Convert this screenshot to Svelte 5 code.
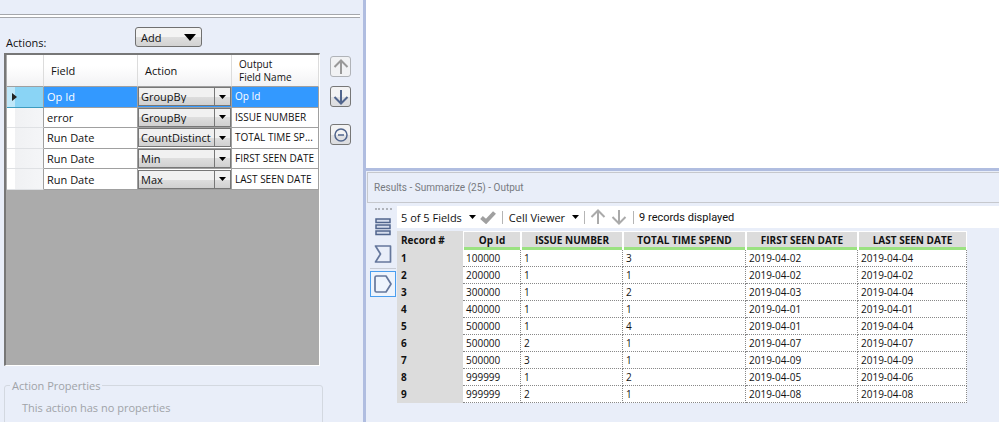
<script>
  const ACTION_TYPES = ['GroupBy', 'CountDistinct', 'Min', 'Max'];

  let actions = $state([
    { field: 'Op Id', action: 'GroupBy', output: 'Op Id' },
    { field: 'error', action: 'GroupBy', output: 'ISSUE NUMBER' },
    { field: 'Run Date', action: 'CountDistinct', output: 'TOTAL TIME SP...' },
    { field: 'Run Date', action: 'Min', output: 'FIRST SEEN DATE' },
    { field: 'Run Date', action: 'Max', output: 'LAST SEEN DATE' },
  ]);
  let selected = $state(0);

  const columns = ['Op Id', 'ISSUE NUMBER', 'TOTAL TIME SPEND', 'FIRST SEEN DATE', 'LAST SEEN DATE'];
  const records = [
    ['100000', 1, 3, '2019-04-02', '2019-04-04'],
    ['200000', 1, 1, '2019-04-02', '2019-04-02'],
    ['300000', 1, 2, '2019-04-03', '2019-04-04'],
    ['400000', 1, 1, '2019-04-01', '2019-04-01'],
    ['500000', 1, 4, '2019-04-01', '2019-04-04'],
    ['500000', 2, 1, '2019-04-07', '2019-04-07'],
    ['500000', 3, 1, '2019-04-09', '2019-04-09'],
    ['999999', 1, 2, '2019-04-05', '2019-04-06'],
    ['999999', 2, 1, '2019-04-08', '2019-04-08'],
  ];
</script>

{#snippet arrow(d)}
  <svg width="16" height="16" viewBox="0 0 16 16" fill="none" stroke="currentColor" stroke-width="2">
    <path {d} />
  </svg>
{/snippet}

{#snippet caret()}
  <svg class="caret" width="7" height="4" viewBox="0 0 7 4"><path d="M0 0h7L3.500 4z" fill="#000" /></svg>
{/snippet}

<div class="app">
  <section class="config">
    <div class="splitter"></div>
    <div class="top">
      <span class="title">Actions:</span>
      <button class="add">
        Add
        <svg width="12" height="7" viewBox="0 0 12 7"><path d="M0 0h12L6 7z" /></svg>
      </button>
    </div>

    <div class="body">
      <div class="grid">
        <table class="actions">
          <colgroup>
            <col class="c-mark" /><col class="c-field" /><col class="c-field" /><col />
          </colgroup>
          <thead>
            <tr><th></th><th>Field</th><th>Action</th><th class="out">Output<br />Field Name</th></tr>
          </thead>
          <tbody>
            {#each actions as row, i}
              <tr class:selected={selected === i} onclick={() => (selected = i)}>
                <td class="mark">
                  {#if selected === i}
                    <svg width="5" height="8" viewBox="0 0 5 8"><path d="M0 0l5 4-5 4z" fill="#222" /></svg>
                  {/if}
                </td>
                <td>{row.field}</td>
                <td class="pick">
                  <div class="combo">
                    <select bind:value={row.action} aria-label="Action for {row.field}">
                      {#each ACTION_TYPES as type}
                        <option>{type}</option>
                      {/each}
                    </select>
                    <span class="drop">{@render caret()}</span>
                  </div>
                </td>
                <td class="out">{row.output}</td>
              </tr>
            {/each}
          </tbody>
        </table>
      </div>
      <div class="side">
        <button class="tool dim" aria-label="Move up">{@render arrow('M8 15V2M1.500 8L8 1.500L14.500 8')}</button>
        <button class="tool" aria-label="Move down">{@render arrow('M8 1v13M1.500 8L8 14.500L14.500 8')}</button>
        <button class="tool remove" aria-label="Remove">
          <svg width="14" height="14" viewBox="0 0 14 14" fill="none" stroke="currentColor" stroke-width="1.500">
            <circle cx="7" cy="7" r="6" /><path d="M4 7h6" />
          </svg>
        </button>
      </div>
    </div>

    <fieldset>
      <legend>Action Properties</legend>
      <p>This action has no properties</p>
    </fieldset>
  </section>

  <main>
    <div class="canvas"></div>
    <section class="results">
      <header>Results - Summarize (25) - Output</header>
      <div class="output">
        <nav>
          <span class="grip"></span>
          <button aria-label="Messages">
            <svg width="16" height="18" viewBox="0 0 16 18" fill="#d5dcec" stroke="#51658d" stroke-width="1.500">
              <path d="M1 1h14v3.500H1zM1 7h14v3.500H1zM1 13h14v3.500H1z" />
            </svg>
          </button>
          <button class="input" aria-label="Input anchor">
            <svg width="18" height="18" viewBox="0 0 18 18" fill="none" stroke="#65779c" stroke-width="1.700">
              <path d="M1.500 1h15v16h-15l5-8z" stroke-linejoin="round" />
            </svg>
          </button>
          <button class="current" aria-label="Output anchor">
            <svg width="18" height="18" viewBox="0 0 18 18" fill="none" stroke="#65779c" stroke-width="1.700">
              <path d="M2.500 1H12l5 8-5 8H2.500Q1 17 1 15.500v-13Q1 1 2.500 1z" stroke-linejoin="round" />
            </svg>
          </button>
        </nav>
        <div class="data">
          <div class="toolbar">
            <button class="menu">5 of 5 Fields {@render caret()}</button>
            <button class="check" aria-label="Apply">
              <svg width="16" height="13" viewBox="0 0 16 13" fill="none" stroke="#a0a0a0" stroke-width="4">
                <path d="M1.500 6.500L6 10.500L14.500 1.500" />
              </svg>
            </button>
            <span class="sep"></span>
            <button class="menu viewer">Cell Viewer {@render caret()}</button>
            <span class="sep"></span>
            <button class="nav" aria-label="Previous">{@render arrow('M8 15V2M1.500 8L8 1.500L14.500 8')}</button>
            <button class="nav" aria-label="Next">{@render arrow('M8 1v13M1.500 8L8 14.500L14.500 8')}</button>
            <span class="sep"></span>
            <span class="count">9 records displayed</span>
          </div>
          <table class="records">
            <colgroup>
              <col class="r-num" /><col class="r-id" /><col class="r-issue" />
              <col class="r-total" /><col class="r-first" /><col class="r-last" />
            </colgroup>
            <thead>
              <tr>
                <th class="num">Record #</th>
                {#each columns as name}
                  <th>{name}</th>
                {/each}
              </tr>
            </thead>
            <tbody>
              {#each records as rec, i}
                <tr>
                  <th class="num" scope="row">{i + 1}</th>
                  {#each rec as value}
                    <td>{value}</td>
                  {/each}
                </tr>
              {/each}
            </tbody>
          </table>
        </div>
      </div>
    </section>
  </main>
</div>

<style>
  :global(body) { margin: 0; background: #e9eef9; }
  .app {
    display: grid;
    grid-template-columns: 363px minmax(0, 1fr);
    height: 100vh;
    min-height: 422px;
    overflow: hidden;
    font: 11px/13px 'Open Sans', 'Noto Sans', sans-serif;
    color: #111;
  }
  .app * { box-sizing: border-box; }
  button, select { font: inherit; color: inherit; margin: 0; padding: 0; }
  button { display: flex; align-items: center; border: 0; background: none; }
  svg { display: block; flex: none; }
  table { border-collapse: separate; border-spacing: 0; table-layout: fixed; }

  .config { display: flex; flex-direction: column; min-height: 0; padding-left: 4px; }
  .splitter {
    height: 4px;
    margin: 14px 3px 0 -4px;
    border: solid #a5a7ac;
    border-width: 1px 0;
    background: #fff;
  }
  .top { display: flex; height: 35px; }
  .title { width: 131px; padding: 18px 0 0 2px; }
  .add {
    justify-content: space-between;
    width: 67px;
    height: 20px;
    margin-top: 9px;
    padding: 0 5px;
    border: 1px solid #707070;
    border-radius: 3px;
    background: linear-gradient(#f4f4f4 50%, #dfdfdf 50%, #d2d2d2);
  }
  .body { display: flex; flex: 1; min-height: 0; gap: 10px; }
  .grid {
    width: 316px;
    border: 2px solid #777;
    border-width: 2px 1px 1px 2px;
    border-right-color: #fff;
    border-bottom-color: #fff;
    padding-left: 1px;
    background: #ababab;
  }
  .actions { width: 312px; height: 135px; }
  .c-mark { width: 37px; }
  .c-field { width: 94px; }
  .actions th {
    height: 32px;
    padding: 0 7px;
    border-right: 1px solid #dcdcdc;
    border-bottom: 1px solid #a0a0a0;
    background: linear-gradient(#fff 35%, #f2f2f4);
    font-weight: 400;
    text-align: left;
  }
  .actions td {
    padding: 0 3px;
    border-right: 1px solid #a0a0a0;
    border-bottom: 1px solid #a0a0a0;
    background: #fff;
    white-space: nowrap;
  }
  .actions .out { font-size: 10px; }
  .actions td.mark { padding-left: 5px; border-bottom-color: #dfe1e4; background: linear-gradient(90deg, #fff 8px, #f0f1f3 8px, #f5f6f8); }
  .actions .selected td { background: #3399ff; color: #fff; }
  .actions .selected td.mark { border-bottom-color: #3d9cc0; background: linear-gradient(90deg, #bfe7f9 8px, #8ad4f5 8px); }
  .actions td.pick { padding: 0; }
  .combo {
    display: grid;
    grid-template-columns: minmax(0, 1fr) 16px;
    height: 19px;
    border: 1px solid #777;
    background: linear-gradient(#f1f1f1 50%, #dedede 50%, #d0d0d0);
    color: #111;
  }
  .combo select {
    grid-area: 1 / 1 / 2 / 3;
    appearance: none;
    border: 0;
    padding-left: 2px;
    background: none;
  }
  .drop {
    grid-area: 1 / 2;
    display: grid;
    place-items: center;
    border-left: 1px solid #777;
    pointer-events: none;
  }
  .side { display: flex; flex-direction: column; gap: 9px; padding-top: 3px; }
  .tool {
    justify-content: center;
    width: 21px;
    height: 21px;
    border: 1px solid #777;
    border-radius: 3px;
    background: linear-gradient(#f3f3f4 50%, #e2e2e4 50%, #dcdde0);
    color: #51658d;
  }
  .tool.dim { border-color: #b0b3b8; background: #f1f2f4; color: #999; }
  .remove { margin-top: 8px; }
  fieldset {
    flex: none;
    width: 319px;
    height: 60px;
    margin: 13px 0 -17px;
    padding: 0 0 0 17px;
    border: 1px solid #d3d8e0;
    border-radius: 3px;
    color: #a0a3a8;
  }
  legend { margin-left: -12px; padding: 0 2px; }
  fieldset p { margin: 9px 0 0; }

  main { display: flex; flex-direction: column; min-width: 0; border-left: 3px solid #b0bde0; }
  .canvas { flex: 1; background: #fff; }
  .results { padding-left: 1px; border-top: 3px solid #b0bde0; }
  header {
    height: 31px;
    margin-top: 1px;
    padding: 8px 6px;
    border: 1px solid #c6c8cd;
    border-right: 0;
    color: #777a80;
    font: 10px/13px Roboto, sans-serif;
  }
  .output { display: flex; height: 219px; padding-top: 3px; }
  nav { display: flex; flex-direction: column; align-items: center; width: 30px; padding-left: 2px; }
  nav button { justify-content: center; width: 26px; height: 26px; }
  nav .input { height: 29px; border-bottom: 1px solid #c8ccd5; }
  nav .current { margin-top: 2px; border: 1px solid #4a9eef; background: #eef4fd; }
  .grip { width: 17px; margin: 2px 0 4px; border-top: 2px dotted #b0b3ba; }
  .data { flex: 1; min-width: 0; }
  .toolbar { display: flex; align-items: center; height: 22px; padding-left: 4px; background: #fff; }
  .menu { gap: 7px; }
  .check { margin: 0 6px 0 4px; }
  .sep { width: 1px; height: 13px; background: #b5b5b5; }
  .viewer { margin: 0 5px 0 6px; }
  .nav { margin-left: 5px; color: #aaa; }
  .nav + .sep { margin: 0 5px 0 6px; }
  .count { font: 11px/13px Roboto, sans-serif; }

  .records { width: 570px; margin-top: 3px; }
  .r-num { width: 66px; }
  .r-id { width: 58px; }
  .r-issue { width: 102px; }
  .r-total { width: 123px; }
  .r-first { width: 112px; }
  .r-last { width: 109px; }
  .records thead th {
    height: 19px;
    padding: 2px 0 0;
    border: solid #fff;
    border-width: 1px 1px 0;
    background: linear-gradient(#dcdcdc 15px, #9be281 15px);
    background-clip: padding-box;
    font-size: 10px;
    line-height: 13px;
    white-space: nowrap;
    vertical-align: top;
  }
  .records .num, .records thead .num {
    padding: 0 4px;
    border: 0;
    background: #dcdcdc;
    font-size: 10px;
    text-align: left;
    vertical-align: middle;
  }
  .records td {
    height: 17px;
    padding: 0 3px;
    border: dotted #888;
    border-width: 0 1px 1px 0;
    background: #fff;
    font-size: 10px;
    line-height: 12px;
  }
</style>
